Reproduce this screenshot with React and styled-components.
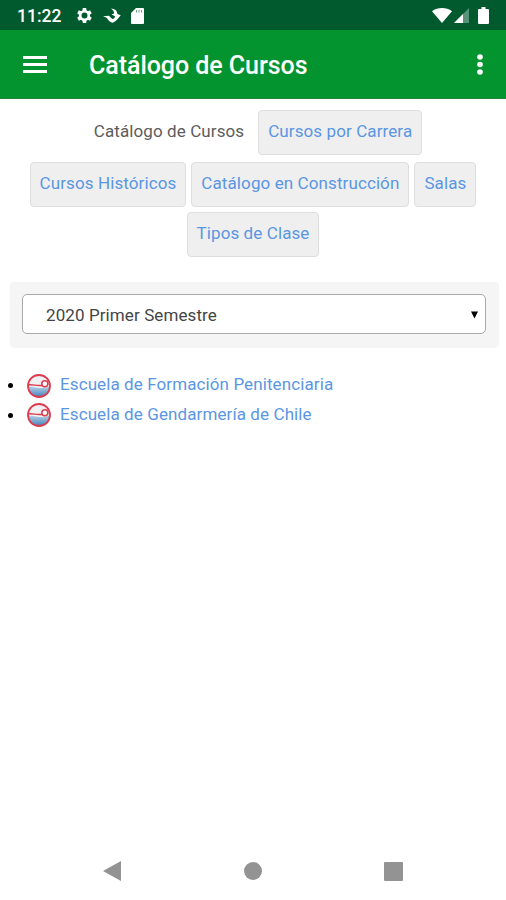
import styled, {createGlobalStyle, ThemeProvider} from 'styled-components';

const theme = {
  colors: {
    primary: '#03942f',
    statusBar: '#005a2e',
    link: '#5a96e3',
    text: '#5c5c5c',
    dark: '#454545',
    tab: '#efefef',
    tabBorder: '#dedede',
    panel: '#f5f5f5',
    navigation: '#939393',
    white: '#fff',
  },
};

const GlobalStyle = createGlobalStyle`
  * {
    box-sizing: border-box;
  }
  body {
    margin: 0;
    background: #fff;
    font-family: Roboto, sans-serif;
  }
`;

const Screen = styled.div`
  width: 506px;
  height: 900px;
  display: flex;
  flex-direction: column;
  overflow: hidden;
  background: ${({theme}) => theme.colors.white};
`;

const StatusBar = styled.div`
  height: 30px;
  flex: none;
  display: flex;
  align-items: center;
  justify-content: space-between;
  padding: 1px 17px 0;
  color: ${({theme}) => theme.colors.white};
  background: ${({theme}) => theme.colors.statusBar};
  svg {
    display: block;
  }
`;

const Clock = styled.span`
  width: 49px;
  padding-top: 1px;
  font-size: 17.5px;
  font-weight: 500;
  line-height: 20px;
`;

const StatusGroup = styled.div`
  display: flex;
  align-items: center;
  gap: ${({$gap}) => $gap}px;
`;

const Signals = styled(StatusGroup)`
  margin-right: 9px;
`;

const Toolbar = styled.header`
  height: 69px;
  flex: none;
  display: flex;
  align-items: center;
  padding: 1px 23px 0;
  color: ${({theme}) => theme.colors.white};
  background: ${({theme}) => theme.colors.primary};
  border-bottom: 1px solid #20853b;
`;

const Title = styled.h1`
  flex: 1;
  margin: 0 0 0 42px;
  padding-top: 2px;
  font-size: 25px;
  font-weight: 500;
  letter-spacing: -0.05px;
  line-height: 30px;
`;

const IconButton = styled.button`
  display: flex;
  padding: 0;
  border: 0;
  color: inherit;
  background: none;
`;

const Main = styled.main`
  flex: 1;
  padding-top: 11px;
`;

const Tabs = styled.nav`
  display: flex;
  flex-direction: column;
`;

const TabRow = styled.div`
  display: flex;
  justify-content: center;
  gap: ${({$gap}) => $gap}px;
  margin-bottom: ${({$space}) => $space}px;
`;

const Tab = styled.a`
  height: 45px;
  padding: 0 9px;
  border: 1px solid ${({$current, theme}) => ($current ? 'transparent' : theme.colors.tabBorder)};
  border-radius: 4px;
  font-size: 17px;
  letter-spacing: 0.1px;
  line-height: 41px;
  white-space: nowrap;
  color: ${({$current, theme}) => ($current ? theme.colors.text : theme.colors.link)};
  background: ${({$current, theme}) => ($current ? 'none' : theme.colors.tab)};
`;

const Panel = styled.section`
  height: 66px;
  margin: 25px 7px 0 10px;
  padding: 12px 13px 0 12px;
  border-radius: 4px;
  background: ${({theme}) => theme.colors.panel};
`;

const Select = styled.div`
  height: 40px;
  display: flex;
  align-items: center;
  justify-content: space-between;
  padding: 1px 7px 0 23px;
  border: 1.5px solid #a9a9a9;
  border-radius: 5px;
  font-size: 17px;
  letter-spacing: 0.1px;
  color: ${({theme}) => theme.colors.dark};
  background: ${({theme}) => theme.colors.white};
`;

const Schools = styled.ul`
  margin: 23px 0 0;
  padding: 0;
  list-style: none;
`;

const School = styled.li`
  height: 29.5px;
  display: flex;
  align-items: center;
  padding-left: 8px;
  svg {
    flex: none;
    margin: 0 9px 0 15px;
  }
`;

const Bullet = styled.span`
  width: 5px;
  height: 5px;
  margin-right: -1px;
  border-radius: 50%;
  background: #000;
`;

const SchoolLink = styled.a`
  padding-bottom: 3px;
  font-size: 17px;
  letter-spacing: 0.1px;
  line-height: 24px;
  color: ${({theme}) => theme.colors.link};
`;

const NavigationBar = styled.footer`
  height: 58px;
  flex: none;
  display: flex;
  align-items: center;
  justify-content: space-between;
  padding: 0 103px;
  color: ${({theme}) => theme.colors.navigation};
`;

const SettingsIcon = () => (
  <svg width="17" height="17" viewBox="2 2 20 20" fill="currentColor">
    <path
      d="M19.400 13a7.800 7.800 0 0 0 0-2l2.100-1.600-2-3.500-2.500 1a7.300 7.300 0 0 0-1.700-1L15 3.200h-4l-.4 2.700a7.300 7.300 0 0 0-1.700 1l-2.500-1-2 3.500L6.500 11a7.800 7.800 0 0 0 0 2l-2.100 1.600 2 3.500 2.500-1a7.300 7.300 0 0 0 1.700 1l.4 2.700h4l.3-2.700a7.300 7.300 0 0 0 1.700-1l2.500 1 2-3.500zM13 15.500a3.500 3.500 0 1 1 0-7 3.500 3.500 0 0 1 0 7z"
      transform="translate(-1)"
      fillRule="evenodd"
    />
  </svg>
);

const SyncIcon = () => (
  <svg width="18" height="16" viewBox="0 0 18 16" fill="currentColor">
    <path d="M8 0.500C12 0.600 14.200 2.800 14.300 5.800L17.800 7.600C15.500 9 14.500 13.200 9.500 14.800C6.500 14 5 12 3.600 9.800L0 8.200L5.800 7.700L9.300 11C11.200 10.700 12 9.400 12 8.200L8.600 6.400L11 5.600C11.300 3.600 10.200 2.400 8 0.500z" />
  </svg>
);

const CardIcon = () => (
  <svg width="13" height="16" viewBox="0 0 13 16">
    <path d="M5 0h7q1 0 1 1v14q0 1-1 1H1q-1 0-1-1V5z" fill="currentColor" />
    <path d="M5.500 2v2.500M8 2v2.500M10.500 2v2.500" stroke="#6f9b80" strokeWidth="1" />
  </svg>
);

const WifiIcon = () => (
  <svg width="20" height="15" viewBox="0 0 20 15" fill="currentColor">
    <path d="M0 3.300C5.500-1.100 14.500-1.100 20 3.300L10 15z" />
  </svg>
);

const SignalIcon = () => (
  <svg width="15" height="15" viewBox="0 0 15 15" fill="currentColor">
    <path d="M15 0v15H0z" opacity="0.350" />
    <path d="M9 6v9H0z" />
  </svg>
);

const BatteryIcon = () => (
  <svg width="11" height="17" viewBox="0 0 11 17" fill="currentColor">
    <path d="M3.500 0h4v2H10q1 0 1 1v13q0 1-1 1H1q-1 0-1-1V3q0-1 1-1h2.500z" />
  </svg>
);

const MenuIcon = () => (
  <svg width="24" height="18" viewBox="0 0 24 18" fill="currentColor">
    <path d="M0 0h24v3H0zM0 7h24v3H0zM0 14h24v3H0z" />
  </svg>
);

const MoreIcon = () => (
  <svg width="6" height="21" viewBox="0 0 6 21" fill="currentColor">
    <circle cx="3" cy="3" r="2.800" />
    <circle cx="3" cy="10.500" r="2.800" />
    <circle cx="3" cy="18" r="2.800" />
  </svg>
);

const SchoolIcon = () => (
  <svg width="24" height="24" viewBox="0 0 24 24" fill="none">
    <defs>
      <linearGradient id="sea" x1="0" y1="0" x2="0" y2="1">
        <stop offset="0" stopColor="#b5cfe6" />
        <stop offset="1" stopColor="#3f80b8" />
      </linearGradient>
    </defs>
    <circle cx="12" cy="12" r="11" fill="#f1f0f2" />
    <path d="M1.200 12.500c4 .3 8 1.500 12 1.500 3 0 6-.5 9.600-1.500a10.800 10.800 0 0 1-21.600 0z" fill="url(#sea)" />
    <circle cx="12" cy="12" r="11" stroke="#dc3c4e" strokeWidth="1.800" />
    <path d="M2 10.800c4-.4 9 1.400 13.500.4" stroke="#dc3c4e" strokeWidth="1.400" />
    <circle cx="17.800" cy="9.800" r="3" fill="#fff" stroke="#dc3c4e" strokeWidth="1.500" />
  </svg>
);

const tabRows = [
  {space: 7, gap: 4, tabs: ['Catálogo de Cursos', 'Cursos por Carrera']},
  {space: 5, gap: 5, tabs: ['Cursos Históricos', 'Catálogo en Construcción', 'Salas']},
  {space: 0, gap: 4, tabs: ['Tipos de Clase']},
];

const schools = ['Escuela de Formación Penitenciaria', 'Escuela de Gendarmería de Chile'];

/**
 * Renders the course catalogue screen
 * @returns {JSX}
 */
const App = () => (
  <ThemeProvider theme={theme}>
    <GlobalStyle />
    <Screen>
      <StatusBar>
        <StatusGroup $gap={10}>
          <Clock>11:22</Clock>
          <SettingsIcon />
          <SyncIcon />
          <CardIcon />
        </StatusGroup>
        <StatusGroup $gap={0}>
          <Signals $gap={2}>
            <WifiIcon />
            <SignalIcon />
          </Signals>
          <BatteryIcon />
        </StatusGroup>
      </StatusBar>
      <Toolbar>
        <IconButton>
          <MenuIcon />
        </IconButton>
        <Title>Catálogo de Cursos</Title>
        <IconButton>
          <MoreIcon />
        </IconButton>
      </Toolbar>
      <Main>
        <Tabs>
          {tabRows.map(({tabs, space, gap}) => (
            <TabRow key={tabs[0]} $space={space} $gap={gap}>
              {tabs.map((tab) => (
                <Tab key={tab} $current={tab === 'Catálogo de Cursos'}>
                  {tab}
                </Tab>
              ))}
            </TabRow>
          ))}
        </Tabs>
        <Panel>
          <Select>
            2020 Primer Semestre
            <svg width="7" height="8" viewBox="0 0 7 8">
              <path d="M0 0.500h7L3.500 7.500z" />
            </svg>
          </Select>
        </Panel>
        <Schools>
          {schools.map((school) => (
            <School key={school}>
              <Bullet />
              <SchoolIcon />
              <SchoolLink>{school}</SchoolLink>
            </School>
          ))}
        </Schools>
      </Main>
      <NavigationBar>
        <svg width="18" height="20" viewBox="0 0 18 20" fill="currentColor">
          <path d="M18 0v20L0 10z" />
        </svg>
        <svg width="18" height="18" viewBox="0 0 18 18" fill="currentColor">
          <circle cx="9" cy="9" r="9" />
        </svg>
        <svg width="19" height="19" viewBox="0 0 19 19" fill="currentColor">
          <rect width="19" height="19" rx="1" />
        </svg>
      </NavigationBar>
    </Screen>
  </ThemeProvider>
);

export default App;
